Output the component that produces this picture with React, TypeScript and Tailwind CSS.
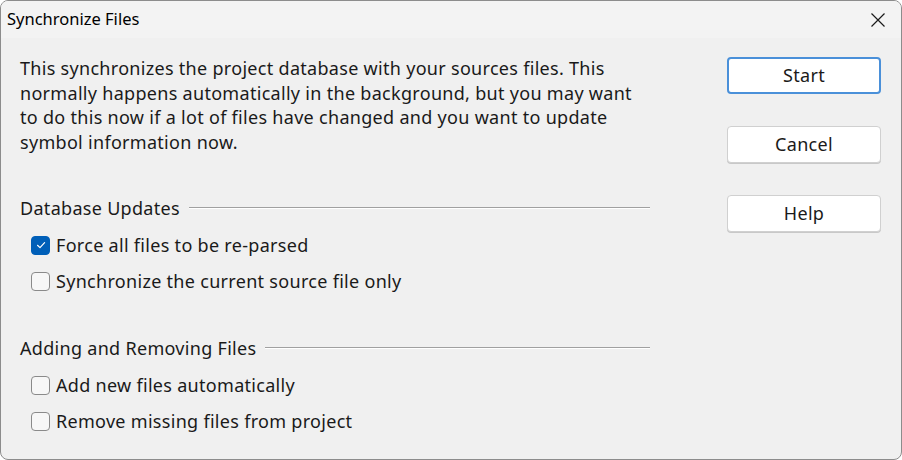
import { useState } from "react";

const font = { fontFamily: '"Noto Sans", "Segoe UI", sans-serif' };

function Check({ label, checked, onChange }: { label: string; checked: boolean; onChange: () => void }) {
  return (
    <label className="flex items-center h-[36px] pl-[11px] cursor-default" onClick={onChange}>
      <span
        className={
          "w-[19px] h-[19px] rounded-[4px] flex items-center justify-center " +
          (checked ? "bg-[#005fb8] border border-[#005fb8]" : "bg-[#f7f7f7] border border-[#8a8a8a]")
        }
      >
        {checked && (
          <svg width="12" height="12" viewBox="0 0 12 12" fill="none">
            <path d="M2.5 6.3 L5 8.6 L9.6 3.6" stroke="white" strokeWidth="1.2" strokeLinecap="round" strokeLinejoin="round" />
          </svg>
        )}
      </span>
      <span className="ml-[6px] text-[18px] tracking-[0.3px] text-[#1a1a1a]">{label}</span>
    </label>
  );
}

function GroupTitle({ text }: { text: string }) {
  return (
    <div className="flex items-center w-[630px] h-[30px]">
      <span className="text-[18px] tracking-[0.3px] text-[#1a1a1a]">{text}</span>
      <div className="flex-1 ml-[9px] h-[1px] bg-[#a0a0a0] border-b border-white box-content"></div>
    </div>
  );
}

function Btn({ text, primary }: { text: string; primary?: boolean }) {
  return (
    <button
      className={
        "w-[154px] h-[37px] rounded-[4px] bg-white text-[18px] tracking-[0.3px] text-[#1a1a1a] " +
        (primary ? "border-2 border-[#4a90d9]" : "border border-[#d0d0d0] shadow-[0_1px_0_#c8c8c8]")
      }
    >
      {text}
    </button>
  );
}

export default function App() {
  const [opts, setOpts] = useState([true, false, false, false]);
  const toggle = (i: number) => setOpts(opts.map((v, j) => (j === i ? !v : v)));

  return (
    <div className="w-[902px] h-[460px] bg-white" style={font}>
      <div className="w-full h-full flex flex-col border border-[#8c8c8c] rounded-[8px] overflow-hidden bg-[#f0f0f0]">
        {/* title bar */}
        <div className="h-[37px] flex items-center justify-between bg-[#f3f3f3] pl-[6px] pr-[15px] shrink-0">
          <span className="text-[16.5px] text-black">Synchronize Files</span>
          <svg width="16" height="16" viewBox="0 0 16 16">
            <path d="M1.5 1.5 L14.5 14.5 M14.5 1.5 L1.5 14.5" stroke="#1a1a1a" strokeWidth="1.2" />
          </svg>
        </div>
        <div className="flex flex-1">
          {/* left */}
          <div className="pl-[19px] pt-[18px] w-[706px]">
            <p className="text-[18px] tracking-[0.3px] leading-[24.5px] text-[#1a1a1a] w-[625px]">
              This synchronizes the project database with your sources files. This normally happens automatically in
              the background, but you may want to do this now if a lot of files have changed and you want to update
              symbol information now.
            </p>
            <div className="mt-[39px]">
              <GroupTitle text="Database Updates" />
              <div className="mt-[4px]">
                <Check label="Force all files to be re-parsed" checked={opts[0]} onChange={() => toggle(0)} />
                <Check label="Synchronize the current source file only" checked={opts[1]} onChange={() => toggle(1)} />
              </div>
            </div>
            <div className="mt-[34px]">
              <GroupTitle text="Adding and Removing Files" />
              <div className="mt-[4px]">
                <Check label="Add new files automatically" checked={opts[2]} onChange={() => toggle(2)} />
                <Check label="Remove missing files from project" checked={opts[3]} onChange={() => toggle(3)} />
              </div>
            </div>
          </div>
          {/* right */}
          <div className="flex flex-col gap-[32px] pt-[19px] pl-[20px]">
            <Btn text="Start" primary />
            <Btn text="Cancel" />
            <Btn text="Help" />
          </div>
        </div>
      </div>
    </div>
  );
}
